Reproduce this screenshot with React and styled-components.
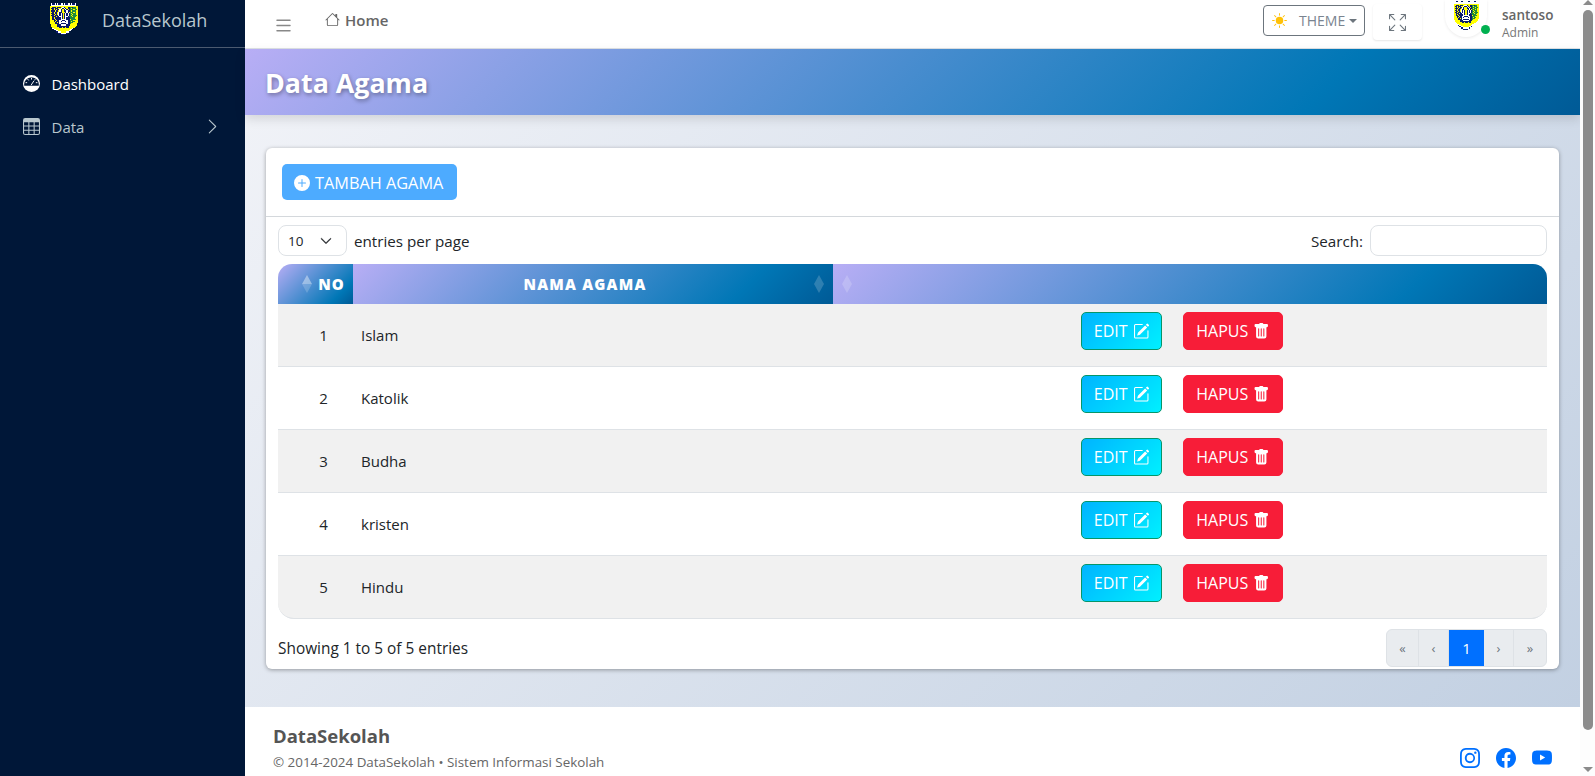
import React from 'react'
import styled, { createGlobalStyle } from 'styled-components'
import {
  BsTable, BsChevronRight, BsChevronDown, BsHouse, BsList, BsArrowsFullscreen,
  BsBrightnessHighFill, BsPlusCircleFill, BsPencilSquare, BsTrashFill, BsInstagram, BsFacebook, BsYoutube,
} from 'react-icons/bs'

const GlobalStyle = createGlobalStyle`
  html, body { margin: 0; height: 100%; overflow: hidden; }
  body { font-family: "Open Sans", "Noto Sans", sans-serif; color: #212529; background: #fff; }
  * { box-sizing: border-box; }
`

const brandGradient = 'linear-gradient(135deg, #b8aef5 0%, #0077b6 80%, #005a96 100%)'

const Page = styled.div`
  display: flex;
  height: 100vh;
`

const Sidebar = styled.aside`
  width: 245px;
  flex: none;
  background: #001738;
  color: #fff;
`

const Brand = styled.div`
  height: 48px;
  display: flex;
  align-items: flex-start;
  padding: 3px 0 0 50px;
  gap: 24px;
  border-bottom: 1px solid #4b5a70;
`

const BrandName = styled.span`
  font-size: 18px;
  line-height: 35px;
  color: #b8c7ce;
`

const SideMenu = styled.nav`
  display: flex;
  flex-direction: column;
  padding-top: 14px;
`

const SideItem = styled.a`
  height: 43px;
  display: flex;
  align-items: center;
  gap: 12px;
  padding: 0 24px 0 23px;
  font-size: 15px;
  color: ${(p) => (p.$active ? '#fff' : '#b8c7ce')};
  svg { font-size: 17px; flex: none; margin-left: -0.5px; }
`

const SideLabel = styled.span`
  flex: 1;
`

const Main = styled.div`
  flex: 1;
  min-width: 0;
  display: flex;
  flex-direction: column;
`

const TopBar = styled.header`
  height: 49px;
  flex: none;
  display: flex;
  align-items: center;
  padding: 0 16px 0 28px;
  background: #fff;
  border-bottom: 1px solid #dee2e6;
  color: #6c757d;
`

const Burger = styled(BsList)`
  font-size: 21px;
  color: #888;
  margin-top: 2px;
`

const HomeLink = styled.a`
  display: flex;
  align-items: center;
  gap: 5px;
  margin: 0 0 9px 31px;
  font-size: 15px;
  font-weight: 600;
  color: #666;
`

const TopRight = styled.div`
  margin-left: auto;
  display: flex;
  align-items: flex-start;
  align-self: stretch;
`

const ThemeButton = styled.button`
  width: 102px;
  height: 31px;
  margin-top: 5px;
  display: flex;
  align-items: center;
  padding: 0 0 0 8px;
  background: #fff;
  border: 1px solid #6c757d;
  border-radius: 4px;
  color: #7a8490;
  font: inherit;
  font-size: 14px;
  svg { color: #ffc107; font-size: 15px; margin-right: 12px; }
  &::after {
    content: '';
    margin-left: 4px;
    border-top: 4px solid #6c757d;
    border-left: 4px solid transparent;
    border-right: 4px solid transparent;
  }
`

const FullscreenButton = styled.button`
  width: 49px;
  height: 36px;
  margin: 4px 0 0 8px;
  display: flex;
  align-items: center;
  justify-content: center;
  background: #fff;
  border: 0;
  border-radius: 4px;
  box-shadow: 0 1px 2px rgba(0, 0, 0, 0.1);
  color: #6c757d;
  font-size: 17px;
`

const UserBox = styled.div`
  display: flex;
  margin-left: 23px;
  position: relative;
`

const Avatar = styled.div`
  width: 42px;
  height: 37px;
  padding-top: 1px;
  border-radius: 0 0 21px 21px;
  box-shadow: 0 1px 3px rgba(0, 0, 0, 0.08);
  display: flex;
  justify-content: center;
`

const OnlineDot = styled.span`
  position: absolute;
  left: 36px;
  top: 25px;
  width: 9px;
  height: 9px;
  border-radius: 50%;
  background: #00b050;
`

const UserText = styled.div`
  margin-left: 15px;
  padding-top: 7px;
  width: 62px;
`

const UserName = styled.div`
  font-size: 13.5px;
  font-weight: 600;
  line-height: 17px;
  color: #666;
`

const UserRole = styled.div`
  font-size: 12px;
  line-height: 17px;
  color: #777;
`

const TitleBand = styled.div`
  height: 66px;
  flex: none;
  display: flex;
  align-items: center;
  padding-left: 20px;
  background: ${brandGradient};
  box-shadow: 0 4px 10px rgba(0, 0, 0, 0.12);
  position: relative;
`

const PageTitle = styled.h1`
  margin: 0;
  font-size: 26.8px;
  font-weight: 700;
  color: #fff;
  text-shadow: 1px 2px 4px rgba(0, 0, 0, 0.35);
`

const Content = styled.main`
  flex: 1;
  min-height: 0;
  padding: 33px 21px 0;
  background: linear-gradient(135deg, #f0f2f7 0%, #c2d0e2 100%);
`

const Card = styled.section`
  height: 521px;
  background: #fff;
  border-radius: 6px;
  box-shadow: 0 1px 4px rgba(0, 0, 0, 0.35);
  display: flex;
  flex-direction: column;
`

const CardHeader = styled.div`
  height: 69px;
  flex: none;
  padding: 16px 16px 0;
  border-bottom: 1px solid #d4d8dc;
`

const AddButton = styled.button`
  width: 175px;
  height: 36px;
  display: flex;
  align-items: center;
  gap: 5px;
  padding: 1px 12px 0;
  background: #4dabff;
  border: 0;
  border-radius: 5px;
  color: #fff;
  font: inherit;
  font-size: 16.3px;
  white-space: nowrap;
  svg { font-size: 16px; flex: none; }
`

const CardBody = styled.div`
  padding: 8px 12px 0;
  flex: 1;
  display: flex;
  flex-direction: column;
`

const TableTools = styled.div`
  height: 39px;
  flex: none;
  display: flex;
  align-items: flex-start;
  justify-content: space-between;
  font-size: 15.2px;
`

const ToolGroup = styled.label`
  display: flex;
  align-items: center;
  gap: 7px;
  height: 31px;
`

const PageSize = styled.div`
  width: 69px;
  height: 31px;
  display: flex;
  align-items: center;
  justify-content: space-between;
  padding: 0 14px 0 9px;
  border: 1px solid #dee2e6;
  border-radius: 8px;
  font-size: 13.5px;
  svg { font-size: 12px; stroke-width: 0.8; }
`

const SearchInput = styled.input`
  width: 177px;
  height: 31px;
  border: 1px solid #dee2e6;
  border-radius: 8px;
  background: #fff;
`

const Table = styled.table`
  width: 100%;
  border-collapse: separate;
  border-spacing: 0;
  table-layout: fixed;
`

const HeadCell = styled.th`
  height: 40px;
  padding: 0 16px 0 0;
  width: ${(p) => p.$width || 'auto'};
  background: ${brandGradient};
  color: #fff;
  font-size: 15px;
  font-weight: 800;
  letter-spacing: 1.2px;
  position: relative;
  &:first-child { border-top-left-radius: 14px; text-align: right; padding-right: 8px; }
  &:last-child { border-top-right-radius: 14px; }
`

const SortMark = styled.span`
  position: absolute;
  top: 11px;
  left: ${(p) => p.$left};
  display: flex;
  flex-direction: column;
  &::before, &::after {
    content: '';
    border-left: 5.5px solid transparent;
    border-right: 5.5px solid transparent;
  }
  &::before { border-bottom: 9px solid rgba(255, 255, 255, ${(p) => p.$up || 0.18}); }
  &::after { border-top: 9px solid rgba(255, 255, 255, 0.18); }
`

const Row = styled.tr`
  background: ${(p) => (p.$odd ? '#f1f1f1' : '#fff')};
  &:last-child td:first-child { border-bottom-left-radius: 16px; }
  &:last-child td:last-child { border-bottom-right-radius: 16px; }
`

const Cell = styled.td`
  height: 63px;
  padding: 0 8px;
  font-size: 15px;
  border-bottom: 1px solid #dee2e6;
  text-align: ${(p) => (p.$center ? 'center' : 'left')};
  padding-left: ${(p) => (p.$center ? '24px' : '8px')};
`

const ActionRow = styled.div`
  display: flex;
  gap: 21px;
  margin: -8px 0 0 240px;
`

const EditButton = styled.button`
  width: 81px;
  height: 38px;
  display: flex;
  align-items: center;
  justify-content: center;
  gap: 5px;
  padding: 0;
  background: linear-gradient(135deg, #00b4ff 0%, #00f0ff 100%);
  border: 1px solid #059669;
  border-radius: 5px;
  color: #fff;
  font: inherit;
  font-size: 16px;
  svg { font-size: 16.5px; }
`

const DeleteButton = styled(EditButton)`
  width: 100px;
  background: #f71d38;
  border-color: #f71d38;
`

const TableFooter = styled.div`
  display: flex;
  justify-content: space-between;
  align-items: center;
  margin-top: 10px;
  font-size: 15.4px;
`

const Pager = styled.div`
  display: flex;
  height: 38px;
  border: 1px solid #dee2e6;
  border-radius: 6px;
  background: #e9ecef;
  overflow: hidden;
`

const PagerItem = styled.span`
  width: ${(p) => p.$width}px;
  display: flex;
  align-items: center;
  justify-content: center;
  font-size: ${(p) => (p.$active ? '15px' : '13px')};
  color: ${(p) => (p.$active ? '#fff' : '#6c757d')};
  background: ${(p) => (p.$active ? '#0070ff' : 'transparent')};
  border-right: ${(p) => (p.$active ? '0' : '1px solid #dee2e6')};
  &:last-child { border-right: 0; }
`

const Footer = styled.footer`
  height: 69px;
  flex: none;
  display: flex;
  justify-content: space-between;
  padding: 17px 28px 0 28px;
  background: #fff;
`

const FooterTitle = styled.div`
  font-size: 18.5px;
  font-weight: 700;
  line-height: 24px;
  color: #555;
`

const FooterText = styled.div`
  margin-top: 5px;
  font-size: 13.4px;
  line-height: 18px;
  color: #666;
`

const Socials = styled.div`
  display: flex;
  gap: 16px;
  padding-top: 24px;
  color: #0070ff;
  font-size: 20px;
`

const ScrollTrack = styled.div`
  width: 15px;
  flex: none;
  background: #fdfdfd;
  display: flex;
  flex-direction: column;
  align-items: center;
  padding-top: 10px;
  position: relative;
  &::before, &::after {
    content: '';
    position: absolute;
    border-left: 5px solid transparent;
    border-right: 5px solid transparent;
  }
  &::before { top: 0; border-bottom: 5px solid #8a8a8a; }
  &::after { bottom: 4px; border-top: 5px solid #8a8a8a; }
`

const ScrollThumb = styled.div`
  width: 10px;
  height: 120px;
  flex: 0 0 720px;
  border-radius: 5px;
  background: #8c8c8c;
`

// the school crest is a low-res bitmap in the original, so it's drawn as a pixel map
const crestPixels = [
  ' wnnw wnnww wnnww wnnw  ',
  ' wwwwwwwwwwwwwwwwwwwww  ',
  'yyyyyyyyyyyyyyyyyyyyyyyy',
  'yynnnynnnywwnyynnggnggyy',
  'ynnynnnyywnnwnynngygggyy',
  'yynynynnwnyynwnyngggyggy',
  'ynnnynnywnyynnwnngygggyy',
  'yynynnywnnyyynwnygggygyy',
  'ynnynnywnwnynwnwngygggyy',
  'yynnynywnwnynwnwnggyggyy',
  'ynnynnnwnwnynwnwngyggggy',
  'yynnnynnwwnynwwngggyggyy',
  'yynynnnnnwnynwnnnggggyyy',
  'yynnynnnnwwwwwnnnyggggyy',
  'yyynnynnwwnnnwwnngggyyyy',
  'yyynynnnwnwwwnwnngyggyyy',
  'yyyynnynwwwwwwwnngggyyyy',
  'yyyynnnnwnnnnnwnngyyyyy ',
  ' yyyyynnnwwwwwnnnyyyyyy ',
  ' yyyyynnnnnnnnnnyyyyyy  ',
  '  yyyyyynnynnynnyyyyy   ',
  '  wyyyyyyyyyyyyyyyyw    ',
  '   wwyyyyyyyyyyyyww     ',
  '    nwwyyyyyyyyyww      ',
  '     nnwwyyyyywwn       ',
  '       nnwwwwwn         ',
  '         nnnn           ',
]

const crestColors = { w: '#ffffff', n: '#0a1a6b', y: '#ffff00', g: '#1f8a3a' }

const Crest = ({ size }) => (
  <svg width={size} height={size * 1.16} viewBox="0 0 24 27" shapeRendering="crispEdges">
    {crestPixels.map((line, y) =>
      [...line].map((c, x) =>
        c === ' ' ? null : <rect key={`${x}-${y}`} x={x} y={y} width="1" height="1" fill={crestColors[c]} />
      )
    )}
  </svg>
)

const DashIcon = () => (
  <svg width="17" height="17" viewBox="0 0 16 16">
    <circle cx="8" cy="8" r="8" fill="#fff" />
    <path d="M1.2 10.2a6.9 6.9 0 1 1 13.6 0z" fill="#001738" />
    <path d="M8 2.6v1.7M4.4 3.9l.9 1.2M11.6 3.9l-.9 1.2M2.4 7.2h1.5M12.1 7.2h1.5M7.6 9.6l2.6-4" stroke="#fff" strokeWidth="0.9" fill="none" />
  </svg>
)

const rows = ['Islam', 'Katolik', 'Budha', 'kristen', 'Hindu']

export default function App() {
  return (
    <Page>
      <GlobalStyle />
      <Sidebar>
        <Brand>
          <Crest size={28} />
          <BrandName>DataSekolah</BrandName>
        </Brand>
        <SideMenu>
          <SideItem $active>
            <DashIcon />
            <SideLabel>Dashboard</SideLabel>
          </SideItem>
          <SideItem>
            <BsTable />
            <SideLabel>Data</SideLabel>
            <BsChevronRight />
          </SideItem>
        </SideMenu>
      </Sidebar>
      <Main>
        <TopBar>
          <Burger />
          <HomeLink><BsHouse /> Home</HomeLink>
          <TopRight>
            <ThemeButton><BsBrightnessHighFill /> THEME</ThemeButton>
            <FullscreenButton><BsArrowsFullscreen /></FullscreenButton>
            <UserBox>
              <Avatar><Crest size={25} /></Avatar>
              <OnlineDot />
              <UserText>
                <UserName>santoso</UserName>
                <UserRole>Admin</UserRole>
              </UserText>
            </UserBox>
          </TopRight>
        </TopBar>
        <TitleBand>
          <PageTitle>Data Agama</PageTitle>
        </TitleBand>
        <Content>
          <Card>
            <CardHeader>
              <AddButton><BsPlusCircleFill /> TAMBAH AGAMA</AddButton>
            </CardHeader>
            <CardBody>
              <TableTools>
                <ToolGroup>
                  <PageSize>10 <BsChevronDown /></PageSize>
                  entries per page
                </ToolGroup>
                <ToolGroup>
                  Search:
                  <SearchInput />
                </ToolGroup>
              </TableTools>
              <Table>
                <thead>
                  <tr>
                    <HeadCell $width="75px"><SortMark $left="24px" $up={0.4} />NO</HeadCell>
                    <HeadCell $width="480px">NAMA AGAMA<SortMark $left="461px" /></HeadCell>
                    <HeadCell><SortMark $left="9px" /></HeadCell>
                  </tr>
                </thead>
                <tbody>
                  {rows.map((name, i) => (
                    <Row key={name} $odd={i % 2 === 0}>
                      <Cell $center>{i + 1}</Cell>
                      <Cell>{name}</Cell>
                      <Cell>
                        <ActionRow>
                          <EditButton>EDIT <BsPencilSquare /></EditButton>
                          <DeleteButton>HAPUS <BsTrashFill /></DeleteButton>
                        </ActionRow>
                      </Cell>
                    </Row>
                  ))}
                </tbody>
              </Table>
              <TableFooter>
                <span>Showing 1 to 5 of 5 entries</span>
                <Pager>
                  <PagerItem $width={32}>«</PagerItem>
                  <PagerItem $width={30}>‹</PagerItem>
                  <PagerItem $width={35} $active>1</PagerItem>
                  <PagerItem $width={30}>›</PagerItem>
                  <PagerItem $width={32}>»</PagerItem>
                </Pager>
              </TableFooter>
            </CardBody>
          </Card>
        </Content>
        <Footer>
          <div>
            <FooterTitle>DataSekolah</FooterTitle>
            <FooterText>© 2014-2024 DataSekolah • Sistem Informasi Sekolah</FooterText>
          </div>
          <Socials>
            <BsInstagram />
            <BsFacebook />
            <BsYoutube />
          </Socials>
        </Footer>
      </Main>
      <ScrollTrack>
        <ScrollThumb />
      </ScrollTrack>
    </Page>
  )
}
